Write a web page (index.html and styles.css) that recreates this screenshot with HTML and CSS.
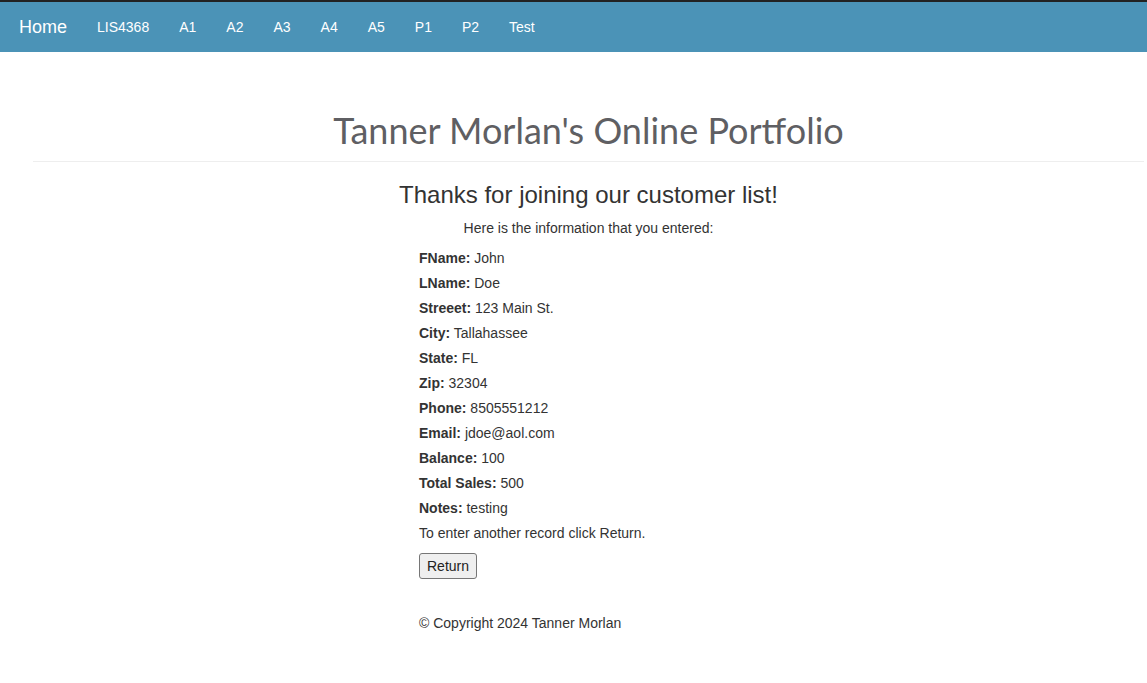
FILE: index.html
```html
<!DOCTYPE html>
<html lang="en">
<head>
<meta charset="utf-8">
<title>Tanner Morlan's Online Portfolio</title>
<link rel="stylesheet" href="styles.css">
</head>
<body>
<nav class="navbar">
  <a class="brand" href="#">Home</a>
  <ul class="nav-links">
    <li><a href="#">LIS4368</a></li>
    <li><a href="#">A1</a></li>
    <li><a href="#">A2</a></li>
    <li><a href="#">A3</a></li>
    <li><a href="#">A4</a></li>
    <li><a href="#">A5</a></li>
    <li><a href="#">P1</a></li>
    <li><a href="#">P2</a></li>
    <li><a href="#">Test</a></li>
  </ul>
</nav>
<main class="page">
  <header class="page-header">
    <h1 class="page-title">Tanner Morlan's Online Portfolio</h1>
  </header>
  <h3 class="thanks">Thanks for joining our customer list!</h3>
  <p class="intro">Here is the information that you entered:</p>
  <div class="details">
    <div class="row"><span class="label">FName:</span> John</div>
    <div class="row"><span class="label">LName:</span> Doe</div>
    <div class="row"><span class="label">Streeet:</span> 123 Main St.</div>
    <div class="row"><span class="label">City:</span> Tallahassee</div>
    <div class="row"><span class="label">State:</span> FL</div>
    <div class="row"><span class="label">Zip:</span> 32304</div>
    <div class="row"><span class="label">Phone:</span> 8505551212</div>
    <div class="row"><span class="label">Email:</span> jdoe@aol.com</div>
    <div class="row"><span class="label">Balance:</span> 100</div>
    <div class="row"><span class="label">Total Sales:</span> 500</div>
    <div class="row"><span class="label">Notes:</span> testing</div>
    <p class="hint">To enter another record click Return.</p>
    <button class="btn" type="button">Return</button>
    <footer class="footer">© Copyright 2024 Tanner Morlan</footer>
  </div>
</main>
</body>
</html>
```
FILE: styles.css
```css
* { box-sizing: border-box; }
html, body { margin: 0; padding: 0; }
body {
  font-family: "Liberation Sans", Arial, sans-serif;
  font-size: 14px;
  line-height: 20px;
  color: #333;
  background: #fff;
}
.navbar {
  display: flex;
  align-items: center;
  height: 52px;
  border-top: 2px solid #222;
  background: #4b93b7;
  padding-left: 4px;
}
.navbar a { color: #fff; text-decoration: none; }
.brand {
  font-size: 18px;
  line-height: 20px;
  padding: 15px;
}
.nav-links {
  display: flex;
  list-style: none;
  margin: 0;
  padding: 0;
}
.nav-links a {
  display: block;
  padding: 15px;
  font-size: 14px;
  line-height: 20px;
}
.page {
  margin: 0 3px 0 33px;
}
.page-header {
  padding-top: 58px;
  border-bottom: 1px solid #eee;
  padding-bottom: 11px;
}
.page-title {
  margin: 0;
  text-align: center;
  font-family: Lato, "Open Sans", sans-serif;
  font-weight: 400;
  font-size: 36px;
  line-height: 40px;
  color: #5f5f63;
}
.thanks {
  margin: 20px 0 10px;
  text-align: center;
  font-size: 24px;
  font-weight: 400;
  line-height: 26.4px;
}
.intro {
  margin: 0 0 10px;
  text-align: center;
}
.details {
  margin-left: 386px;
}
.row {
  margin-bottom: 5px;
}
.label { font-weight: bold; }
.hint { margin: 0 0 10px; }
.btn {
  display: block;
  font-family: inherit;
  font-size: 14px;
  line-height: 20px;
  color: #222;
  background: #efefef;
  border: 1px solid #767676;
  border-radius: 3px;
  padding: 2px 7px;
}
.footer {
  margin-top: 34px;
  padding-bottom: 40px;
}
```
